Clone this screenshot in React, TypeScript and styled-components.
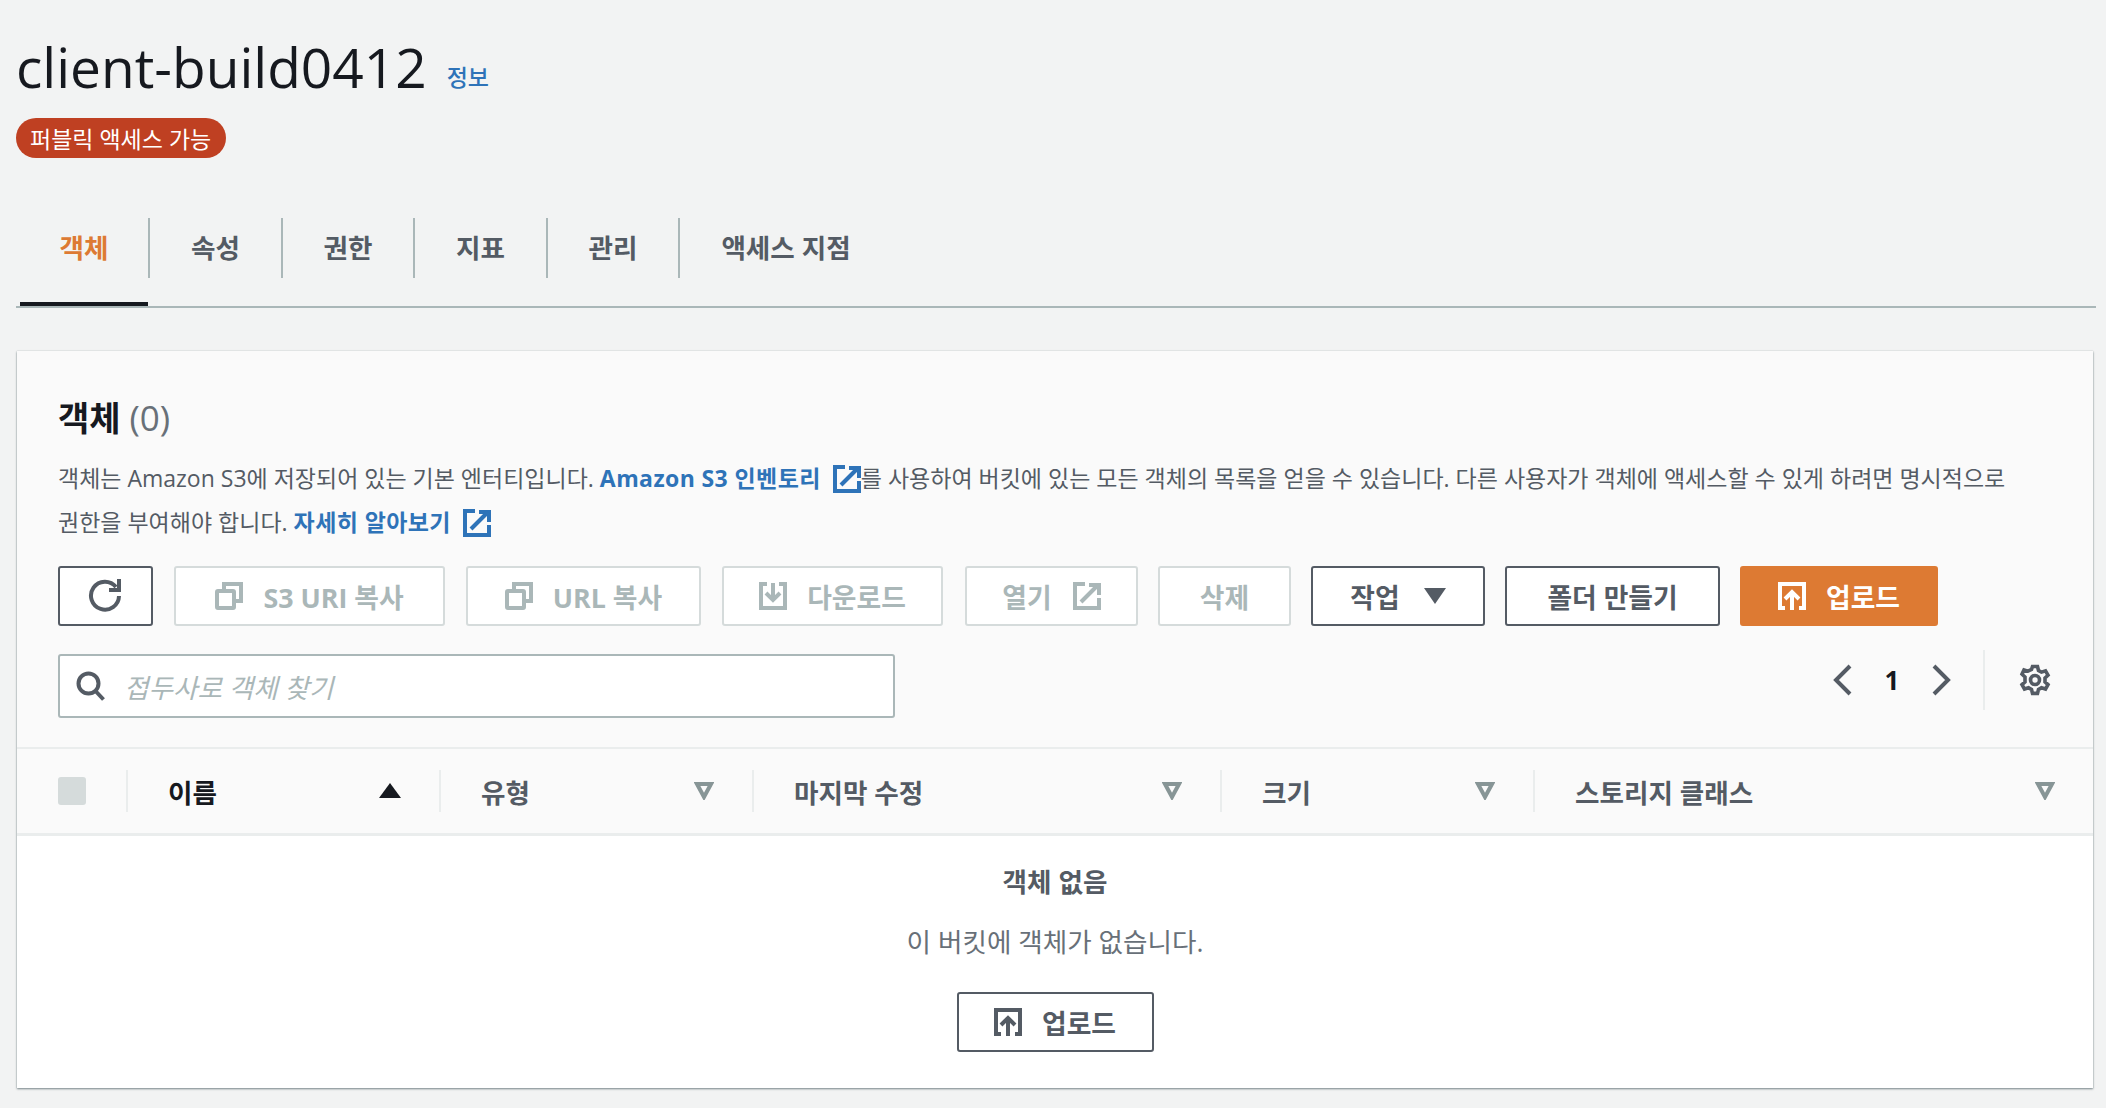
import * as React from 'react'
import styled, { createGlobalStyle } from 'styled-components'

const GlobalStyle = createGlobalStyle`
  html, body {
    margin: 0;
    padding: 0;
    background: #f2f3f3;
    font-family: "Open Sans", "Noto Sans CJK KR", "Noto Sans", sans-serif;
    color: #16191f;
  }
  * { box-sizing: border-box; }
`

const Page = styled.div`
  width: 2106px;
  height: 1108px;
  padding: 0 13px 0 16px;
  overflow: hidden;
`

const TitleRow = styled.div`
  display: flex;
  align-items: baseline;
  gap: 20px;
  height: 118px;
  padding-top: 29px;
`

const Title = styled.h1`
  margin: 0;
  font-size: 55px;
  font-weight: 500;
  line-height: 76px;
  color: #16191f;
`

const InfoLink = styled.a`
  font-size: 23px;
  font-weight: 500;
  color: #2e73b8;
  transform: translateY(-2px);
`

const Badge = styled.span`
  display: inline-flex;
  align-items: center;
  height: 40px;
  padding: 0 15px 0 14px;
  border-radius: 20px;
  background: #bf4022;
  color: #fff;
  font-size: 23px;
`

const Tabs = styled.div`
  display: flex;
  height: 150px;
  padding: 60px 0 0 4px;
  border-bottom: 2px solid #aab7b8;
  width: 2080px;
`

const Tab = styled.div<{ $active?: boolean; $w: number; $last?: boolean }>`
  position: relative;
  width: ${(p) => p.$w}px;
  height: 60px;
  display: flex;
  align-items: center;
  justify-content: center;
  padding-bottom: 3px;
  font-size: 26.6px;
  font-weight: 700;
  color: ${(p) => (p.$active ? '#dd7a33' : '#545b64')};
  border-right: ${(p) => (p.$last ? 'none' : '2px solid #aab7b8')};

  &::after {
    content: '';
    display: ${(p) => (p.$active ? 'block' : 'none')};
    position: absolute;
    left: 0;
    right: 0;
    bottom: -28px;
    height: 4px;
    background: #16191f;
  }
`

const Panel = styled.section`
  width: 2076px;
  height: 737px;
  margin: 43px 0 0 1px;
  background: #fafafa;
  box-shadow: 0 1px 2px rgba(0, 28, 36, 0.5), 0 0 1px rgba(0, 28, 36, 0.2);
  display: flex;
  flex-direction: column;
`

const PanelHead = styled.div`
  height: 398px;
  padding: 41px 42px 0 41px;
  border-bottom: 2px solid #eaeded;
`

const Heading = styled.h2`
  margin: 0;
  font-size: 34px;
  font-weight: 700;
  line-height: 52px;
  color: #16191f;

  span {
    font-size: 35px;
    font-weight: 400;
    color: #687078;
  }
`

const Description = styled.p`
  width: 1968px;
  margin: 12px 0 0;
  font-size: 23px;
  line-height: 44px;
  color: #545b64;
  word-break: break-all;

  a {
    color: #2e73b8;
    font-weight: 700;
    letter-spacing: 0.4px;
  }
`

const ExternalMark = styled.svg`
  display: inline-block;
  vertical-align: -6px;
  width: 28px;
  height: 28px;
  margin-left: 12px;
`

const Toolbar = styled.div`
  display: flex;
  margin-top: 22px;
  height: 60px;
`

const Btn = styled.button<{
  $w: number
  $kind?: 'disabled' | 'normal' | 'primary'
  $ml?: number
  $gap?: number
}>`
  width: ${(p) => p.$w}px;
  height: 60px;
  margin-left: ${(p) => p.$ml ?? 0}px;
  display: flex;
  align-items: center;
  justify-content: center;
  gap: ${(p) => p.$gap ?? 20}px;
  padding: 0;
  border-radius: 3px;
  font-family: inherit;
  font-size: 26.8px;
  font-weight: 700;
  border: 2px solid
    ${(p) =>
      p.$kind === 'disabled' ? '#d5dbdb' : p.$kind === 'primary' ? '#dd7a33' : '#545b64'};
  background: ${(p) => (p.$kind === 'primary' ? '#dd7a33' : '#fff')};
  color: ${(p) =>
    p.$kind === 'disabled' ? '#aab7b8' : p.$kind === 'primary' ? '#fff' : '#545b64'};

  svg {
    flex: none;
  }
`

const FilterRow = styled.div`
  display: flex;
  align-items: center;
  justify-content: space-between;
  margin-top: 28px;
`

const Search = styled.div`
  width: 837px;
  height: 64px;
  display: flex;
  align-items: center;
  gap: 18px;
  padding-left: 16px;
  background: #fff;
  border: 2px solid #aab7b8;
  border-radius: 3px;
`

const Placeholder = styled.span`
  font-size: 26.6px;
  font-style: italic;
  color: #aab7b8;
`

const Pager = styled.div`
  display: flex;
  align-items: center;
  height: 60px;
  margin-top: -12px;
`

const PageNum = styled.span`
  width: 78px;
  text-align: center;
  font-size: 26px;
  font-weight: 700;
  color: #16191f;
`

const PagerDivider = styled.div`
  width: 2px;
  height: 60px;
  margin: 0 34px 0 32px;
  background: #eaeded;
`

const TableHead = styled.div`
  display: grid;
  grid-template-columns: 109px 313px 313px 468px 313px 1fr;
  height: 87px;
  align-items: center;
  border-bottom: 3px solid #eaeded;
  background: #fafafa;
`

const Check = styled.div`
  justify-self: start;
  width: 28px;
  height: 28px;
  margin-left: 41px;
  background: #d5dbdb;
  border-radius: 3px;
`

const HeadCell = styled.div`
  height: 42px;
  display: flex;
  align-items: center;
  justify-content: space-between;
  padding: 0 38px 0 40px;
  border-left: 2px solid #eaeded;
  font-size: 26.6px;
  font-weight: 700;
  color: #545b64;
`

const HeadCellActive = styled(HeadCell)`
  color: #16191f;
`

const Empty = styled.div`
  flex: 1;
  background: #fff;
  display: flex;
  flex-direction: column;
  align-items: center;
  padding-top: 26px;
`

const EmptyTitle = styled.div`
  font-size: 26.6px;
  font-weight: 700;
  line-height: 40px;
  color: #545b64;
`

const EmptyText = styled.div`
  margin-top: 20px;
  font-size: 26.6px;
  line-height: 40px;
  color: #687078;
`

const EmptyButton = styled(Btn)`
  margin-top: 30px;
`

const ExternalIcon = () => (
  <ExternalMark viewBox="0 0 28 28" fill="none" stroke="#2e73b8" strokeWidth="4">
    <path d="M12 2H2v24h24V16" />
    <path d="M16 3h10v10" />
    <path d="M8 20 25 3" />
  </ExternalMark>
)

const ButtonExternal = () => (
  <svg width="28" height="28" viewBox="0 0 28 28" fill="none" stroke="#aab7b8" strokeWidth="4">
    <path d="M12 2H2v24h24V16" />
    <path d="M16 3h10v10" />
    <path d="M8 20 25 3" />
  </svg>
)

const RefreshIcon = () => (
  <svg width="36" height="36" viewBox="0 0 36 36" fill="none" stroke="#545b64" strokeWidth="4">
    <path d="M28 9a14 14 0 1 0 3 9" />
    <path d="M31 1v11H21" />
  </svg>
)

const CopyIcon = () => (
  <svg width="28" height="28" viewBox="0 0 28 28" fill="none" stroke="#aab7b8" strokeWidth="4">
    <rect x="2" y="9" width="17" height="17" rx="1" />
    <path d="M9 8V2h17v17h-6" />
  </svg>
)

const DownloadIcon = () => (
  <svg width="28" height="28" viewBox="0 0 28 28" fill="none" stroke="#aab7b8" strokeWidth="4">
    <path d="M8 2H2v24h24V2h-6" />
    <path d="M14 1v15" />
    <path d="m7 11 7 7 7-7" />
  </svg>
)

const UploadIcon = ({ color }: { color: string }) => (
  <svg width="28" height="28" viewBox="0 0 28 28" fill="none" stroke={color} strokeWidth="4">
    <path d="M7 26H2V2h24v24h-5" />
    <path d="M14 28V11" />
    <path d="m7 17 7-7 7 7" />
  </svg>
)

const SearchIcon = () => (
  <svg width="30" height="30" viewBox="0 0 30 30" fill="none" stroke="#545b64" strokeWidth="4">
    <circle cx="12.500" cy="12.500" r="10" />
    <path d="m19.500 20 8 8.500" />
  </svg>
)

const CaretDown = () => (
  <svg width="22" height="18" viewBox="0 0 22 18">
    <path d="M0 1h22L11 17z" fill="#545b64" />
  </svg>
)

const SortUp = () => (
  <svg width="22" height="16" viewBox="0 0 22 16">
    <path d="M0 15h22L11 0z" fill="#16191f" />
  </svg>
)

const FilterCaret = () => (
  <svg width="20" height="18" viewBox="0 0 20 18" fill="none" stroke="#879596" strokeWidth="4">
    <path d="M3 2h14l-7 13z" />
  </svg>
)

const Chevron = ({ dir }: { dir: 'left' | 'right' }) => (
  <svg width="20" height="32" viewBox="0 0 20 32" fill="none" stroke="#545b64" strokeWidth="4">
    <path d={dir === 'left' ? 'M17 2 3 16l14 14' : 'M3 2l14 14L3 30'} />
  </svg>
)

const GearIcon = () => (
  <svg width="32" height="32" viewBox="0 0 32 32" fill="none" stroke="#545b64" strokeWidth="3.600">
    <circle cx="16" cy="16" r="4.500" />
    <path d="M13.500 2.500h5l1 4 3 1.600 4-1.200 2.500 4.300-3 2.800v3.900l3 2.800-2.500 4.300-4-1.200-3 1.600-1 4h-5l-1-4-3-1.600-4 1.200-2.500-4.300 3-2.800V13l-3-2.800L5 5.900l4 1.200 3.500-1.600z" />
  </svg>
)

export default function App() {
  return (
    <Page>
      <GlobalStyle />
      <TitleRow>
        <Title>client-build0412</Title>
        <InfoLink>정보</InfoLink>
      </TitleRow>
      <Badge>퍼블릭 액세스 가능</Badge>
      <Tabs>
        <Tab $active $w={130}>객체</Tab>
        <Tab $w={133}>속성</Tab>
        <Tab $w={132}>권한</Tab>
        <Tab $w={133}>지표</Tab>
        <Tab $w={132}>관리</Tab>
        <Tab $w={212} $last>액세스 지점</Tab>
      </Tabs>
      <Panel>
        <PanelHead>
          <Heading>
            객체 <span>(0)</span>
          </Heading>
          <Description>
            객체는 Amazon S3에 저장되어 있는 기본 엔터티입니다. <a>Amazon S3 인벤토리</a>
            <ExternalIcon />를 사용하여 버킷에 있는 모든 객체의 목록을 얻을 수 있습니다. 다른 사용자가 객체에 액세스할 수 있게 하려면 명시적으로 권한을 부여해야 합니다. <a>자세히 알아보기</a>
            <ExternalIcon />
          </Description>
          <Toolbar>
            <Btn $w={95}><RefreshIcon /></Btn>
            <Btn $w={271} $ml={21} $kind="disabled"><CopyIcon />S3 URI 복사</Btn>
            <Btn $w={235} $ml={21} $kind="disabled"><CopyIcon />URL 복사</Btn>
            <Btn $w={221} $ml={21} $kind="disabled"><DownloadIcon />다운로드</Btn>
            <Btn $w={173} $ml={22} $kind="disabled" $gap={21}>열기<ButtonExternal /></Btn>
            <Btn $w={133} $ml={20} $kind="disabled">삭제</Btn>
            <Btn $w={174} $ml={20} $gap={24}>작업<CaretDown /></Btn>
            <Btn $w={215} $ml={20}>폴더 만들기</Btn>
            <Btn $w={198} $ml={20} $kind="primary"><UploadIcon color="#fff" />업로드</Btn>
          </Toolbar>
          <FilterRow>
            <Search>
              <SearchIcon />
              <Placeholder>접두사로 객체 찾기</Placeholder>
            </Search>
            <Pager>
              <Chevron dir="left" />
              <PageNum>1</PageNum>
              <Chevron dir="right" />
              <PagerDivider />
              <GearIcon />
            </Pager>
          </FilterRow>
        </PanelHead>
        <TableHead>
          <Check />
          <HeadCellActive>이름<SortUp /></HeadCellActive>
          <HeadCell>유형<FilterCaret /></HeadCell>
          <HeadCell>마지막 수정<FilterCaret /></HeadCell>
          <HeadCell>크기<FilterCaret /></HeadCell>
          <HeadCell>스토리지 클래스<FilterCaret /></HeadCell>
        </TableHead>
        <Empty>
          <EmptyTitle>객체 없음</EmptyTitle>
          <EmptyText>이 버킷에 객체가 없습니다.</EmptyText>
          <EmptyButton $w={197}><UploadIcon color="#545b64" />업로드</EmptyButton>
        </Empty>
      </Panel>
    </Page>
  )
}
